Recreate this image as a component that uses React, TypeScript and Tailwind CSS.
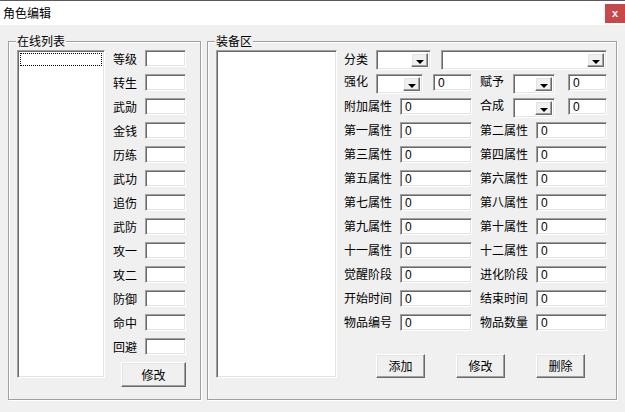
import React from 'react';

const sunken =
  'bg-white border border-t-[#a0a0a0] border-l-[#a0a0a0] border-b-white border-r-white shadow-[inset_1px_1px_0_#696969,inset_-1px_-1px_0_#e3e3e3]';
const raised =
  'bg-[#f0f0f0] border border-t-white border-l-white border-b-[#696969] border-r-[#696969] shadow-[inset_-1px_-1px_0_#a0a0a0,inset_1px_1px_0_#e3e3e3]';

const Input: React.FC<{ w: string; value?: string }> = ({ w, value }) => (
  <div className={`${sunken} ${w} h-[17px] pl-[4px] flex items-center text-[12px] leading-none font-['Liberation_Sans',sans-serif]`}>
    {value}
  </div>
);

const Combo: React.FC<{ w: string; h?: string }> = ({ w, h = 'h-[20px]' }) => (
  <div className={`${sunken} ${w} ${h} flex justify-end p-[2px]`}>
    <div className={`${raised} w-[17px] h-full flex items-center justify-center pt-[3px]`}>
      <div className="w-0 h-0 border-l-[4px] border-r-[4px] border-t-[4px] border-l-transparent border-r-transparent border-t-black" />
    </div>
  </div>
);

const Btn: React.FC<{ w: string; h: string; children: React.ReactNode }> = ({ w, h, children }) => (
  <div className={`${raised} ${w} ${h} flex items-center justify-center text-[12px]`}>{children}</div>
);

const leftRows = ['等级', '转生', '武勋', '金钱', '历练', '武功', '追伤', '武防', '攻一', '攻二', '防御', '命中', '回避'];

const rightRows: [string, string][] = [
  ['第一属性', '第二属性'],
  ['第三属性', '第四属性'],
  ['第五属性', '第六属性'],
  ['第七属性', '第八属性'],
  ['第九属性', '第十属性'],
  ['十一属性', '十二属性'],
  ['觉醒阶段', '进化阶段'],
  ['开始时间', '结束时间'],
  ['物品编号', '物品数量'],
];

const GroupLabel: React.FC<{ text: string }> = ({ text }) => (
  <span className="absolute -top-[9px] left-[7px] px-[1px] bg-[#f0f0f0] leading-[16px] text-[12px]">{text}</span>
);

export default function App() {
  return (
    <div className="w-[625px] h-[412px] bg-[#f0f0f0] text-black font-['Noto_Sans_CJK_SC',sans-serif] text-[12px] flex flex-col overflow-hidden">
      {/* title bar */}
      <div className="h-[25px] bg-white border-t border-t-[#5a5a5a] flex items-center justify-between pl-[3px]">
        <span className="text-[12px]">角色编辑</span>
        <div className="w-[20px] h-[19px] bg-[#c7474a] flex items-center justify-center text-white text-[11px] font-bold font-['Liberation_Sans',sans-serif]">
          x
        </div>
      </div>

      <div className="flex gap-[6px] pl-[8px] pt-[16px]">
        {/* online list */}
        <div className="relative w-[193px] h-[359px] border border-[#a0a0a0] shadow-[inset_1px_1px_0_#fff,1px_1px_0_#fff]">
          <GroupLabel text="在线列表" />
          <div className="flex pl-[8px] pt-[8px] gap-[8px]">
            <div className={`${sunken} w-[88px] h-[328px] p-[2px]`}>
              <div className="h-[13px] border border-dotted border-black" />
            </div>
            <div className="flex flex-col">
              <div className="flex flex-col gap-[7px]">
                {leftRows.map((l) => (
                  <div key={l} className="flex items-center h-[17px]">
                    <span className="w-[32px] leading-none">{l}</span>
                    <Input w="w-[41px]" />
                  </div>
                ))}
              </div>
              <div className="flex justify-end mt-[7px]">
                <Btn w="w-[65px]" h="h-[25px]">修改</Btn>
              </div>
            </div>
          </div>
        </div>

        {/* equipment */}
        <div className="relative w-[410px] h-[359px] border border-[#a0a0a0] shadow-[inset_1px_1px_0_#fff,1px_1px_0_#fff]">
          <GroupLabel text="装备区" />
          <div className="flex pl-[8px] pt-[8px] gap-[7px]">
            <div className={`${sunken} w-[121px] h-[328px]`} />
            <div className="flex flex-col">
              <div className="flex items-center h-[20px]">
                <span className="w-[32px] -mt-[3px]">分类</span>
                <Combo w="w-[55px]" />
                <div className="w-[10px]" />
                <Combo w="w-[166px]" />
              </div>
              <div className="flex items-start h-[20px] mt-[4px]">
                <span className="w-[32px] leading-[14px]">强化</span>
                <Combo w="w-[47px]" />
                <div className="w-[10px]" />
                <Input w="w-[39px]" value="0" />
                <span className="w-[41px] pl-[8px] leading-[14px]">赋予</span>
                <Combo w="w-[42px]" />
                <div className="w-[13px]" />
                <Input w="w-[39px]" value="0" />
              </div>
              <div className="flex items-start h-[20px] mt-[4px]">
                <span className="w-[56px] leading-[16px]">附加属性</span>
                <Input w="w-[72px]" value="0" />
                <span className="w-[41px] pl-[8px] leading-[14px]">合成</span>
                <Combo w="w-[42px]" />
                <div className="w-[13px]" />
                <Input w="w-[39px]" value="0" />
              </div>
              <div className="flex flex-col gap-[7px] mt-[4px]">
                {rightRows.map(([a, b]) => (
                  <div key={a} className="flex items-start h-[17px]">
                    <span className="w-[56px] leading-[16px]">{a}</span>
                    <Input w="w-[72px]" value="0" />
                    <span className="w-[64px] pl-[8px] leading-[16px]">{b}</span>
                    <Input w="w-[71px]" value="0" />
                  </div>
                ))}
              </div>
              <div className="flex gap-[31px] pl-[32px] mt-[23px]">
                <Btn w="w-[49px]" h="h-[24px]">添加</Btn>
                <Btn w="w-[49px]" h="h-[24px]">修改</Btn>
                <Btn w="w-[49px]" h="h-[24px]">删除</Btn>
              </div>
            </div>
          </div>
        </div>
      </div>
    </div>
  );
}
